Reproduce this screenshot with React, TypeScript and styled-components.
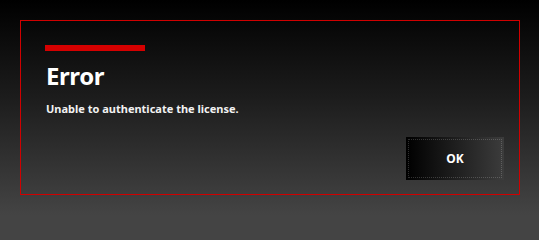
import React from "react";
import styled, { createGlobalStyle } from "styled-components";

const GlobalStyle = createGlobalStyle`
  html, body {
    margin: 0;
    padding: 0;
    background: #444;
  }
  body {
    font-family: "Noto Sans", "Open Sans", sans-serif;
  }
`;

const Screen = styled.div`
  width: 539px;
  height: 215px;
  box-sizing: border-box;
  padding: 20px 19px 20px 20px;
  background: linear-gradient(to bottom, #000 0%, #1c1c1c 45%, #444 100%);
`;

const Dialog = styled.div`
  height: 175px;
  box-sizing: border-box;
  border: 1px solid #d00000;
  padding: 24px 15px 14px 24px;
  display: flex;
  flex-direction: column;
`;

const Accent = styled.div`
  width: 100px;
  height: 6px;
  background: #d50000;
`;

const Title = styled.h1`
  margin: 8px 0 0 1px;
  font-size: 24px;
  font-weight: 700;
  letter-spacing: -0.4px;
  line-height: 34px;
  color: #fff;
`;

const Message = styled.p`
  margin: 8px 0 0 1px;
  font-size: 11px;
  font-weight: 700;
  line-height: 15px;
  color: #f2f2f2;
`;

const Actions = styled.div`
  margin-top: auto;
  display: flex;
  justify-content: flex-end;
`;

const Button = styled.button`
  width: 98px;
  height: 43px;
  border: none;
  background: linear-gradient(to right, #000 0%, #1e1e1e 50%, #3c3c3c 100%);
  color: #fff;
  font-family: "Noto Sans", "Open Sans", sans-serif;
  font-size: 12px;
  font-weight: 700;
  cursor: pointer;
  outline: 1px dotted rgba(255, 255, 255, 0.18);
  outline-offset: -3px;
`;

const App = () => {
  return (
    <>
      <GlobalStyle />
      <Screen>
        <Dialog>
          <Accent />
          <Title>Error</Title>
          <Message>Unable to authenticate the license.</Message>
          <Actions>
            <Button>OK</Button>
          </Actions>
        </Dialog>
      </Screen>
    </>
  );
};

export default App;
